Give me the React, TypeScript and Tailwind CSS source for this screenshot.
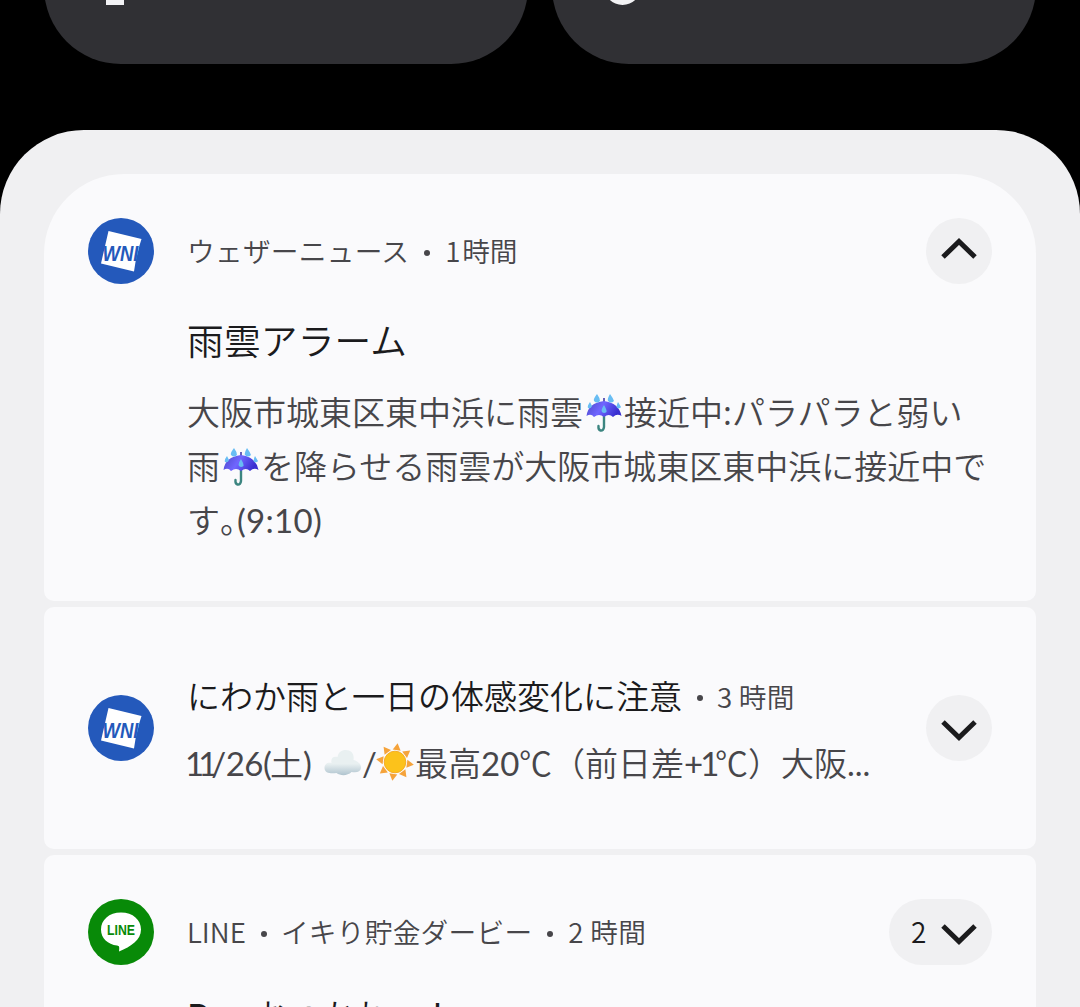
import type { ReactNode } from "react";

const Latin = ({ children, className = "" }: { children: ReactNode; className?: string }) => (
  <span className={`inline-block whitespace-pre font-['Lato','Noto_Sans_CJK_JP',sans-serif] font-normal ${className}`}>{children}</span>
);

const Dot = ({ className = "" }: { className?: string }) => (
  <span className={`inline-block size-[6px] shrink-0 rounded-full bg-[#47464a] ${className}`} />
);

function WeatherLogo() {
  return (
    <svg viewBox="0 0 66 66" className="size-[66px] shrink-0">
      <circle cx="33" cy="33" r="33" fill="#2459bb" />
      <path d="M20.5 13 53.5 21 51.5 27.5 47.500 44 46 53.5 13 45.500z" fill="#fff" />
      <text x="14.500" y="42.500" fontFamily="Liberation Sans" fontWeight="700" fontStyle="italic" fontSize="21.500" textLength="36" lengthAdjust="spacingAndGlyphs" fill="#2459bb">WNI</text>
    </svg>
  );
}

function LineLogo() {
  return (
    <svg viewBox="0 0 66 66" className="size-[66px] shrink-0">
      <circle cx="33" cy="33" r="33" fill="#088a08" />
      <path d="M33 13.500C21 13.500 13 21 13 30.500 13 39.500 20 45.500 29 46.500 31.500 46.800 31.500 48 31 52.500 43 47.500 53 41 53 30.500 53 21 45 13.500 33 13.500z" fill="#fff" />
      <text x="19" y="36" fontFamily="Liberation Sans" fontWeight="700" fontSize="14" textLength="28" lengthAdjust="spacingAndGlyphs" fill="#088a08">LINE</text>
    </svg>
  );
}

const Chevron = ({ up = false }: { up?: boolean }) => (
  <svg viewBox="0 0 40 24" className="h-6 w-10" fill="none" stroke="#1b1b1d" strokeWidth="5">
    <path d={up ? "M4 20 20 4.500 36 20" : "M4 4 20 19.500 36 4"} />
  </svg>
);

const Umbrella = () => (
  <svg viewBox="0 0 38 40" className="mx-[1.500px] inline-block h-[40px] w-[38px] align-[-8px]">
    <defs>
      <linearGradient id="canopy" x1="0" x2="1" y1="0" y2="0.300">
        <stop offset="0" stopColor="#4c48c8" />
        <stop offset="0.500" stopColor="#7066ff" />
        <stop offset="1" stopColor="#392fd0" />
      </linearGradient>
    </defs>
    <path d="M19 18V34Q18.500 38 15.500 37.500 13 37 13.500 33" fill="none" stroke="#3c8580" strokeWidth="2.400" strokeLinecap="round" />
    <path d="M19 5V9" stroke="#6660b8" strokeWidth="2" />
    <path d="M1.500 23Q3 10 19 8 34 10 36.500 23 32 20 28 24 24 20 19 24 14 20 9 24 6 20 1.500 23z" fill="url(#canopy)" />
    <path d="M12 1Q8 6 9 8 12 11 15 8 15 5 12 1zM25 1Q22 6 23 8 26 11 29 8 28 5 25 1zM5 9Q2 13 3 15 6 16 7 13zM33 9Q31 13 32 15 35 16 36 14zM19 12Q15.500 17 17 19 19 21 21.500 19 22 17 19 12z" fill="#68bdf3" />
  </svg>
);

const Cloud = () => (
  <svg viewBox="0 0 38 40" className="mt-[8px] inline-block h-[40px] w-[39px] self-start">
    <defs>
      <linearGradient id="cloud" x1="0" x2="0" y1="0" y2="1">
        <stop offset="0.550" stopColor="#e9f0f1" />
        <stop offset="1" stopColor="#b0c4cf" />
      </linearGradient>
    </defs>
    <path d="M1 25C1 21 4 19 8 20 7 15 10 13 14 14 15 9 18 7 22 7 28 7 31 11 30 17 34 18 38 21 37.500 25 37 29 33 30 28 29 24 33 17 33 13 30 7 31 1 30 1 25z" fill="url(#cloud)" />
  </svg>
);

const Sun = () => (
  <svg viewBox="-20 -20 40 40" className="mt-[7px] inline-block size-[40px] self-start">
    {[8, 53, 98, 143, 188, 233, 278, 323].map((angle) => (
      <path key={angle} d="M-4-12 0-19 4-12z" fill="#f5a33b" transform={`rotate(${angle})`} />
    ))}
    <circle r="10.800" fill="#fcc21b" stroke="#f6ad24" />
  </svg>
);

export default function App() {
  return (
    <main className="flex h-[1007px] w-[1080px] flex-col overflow-hidden bg-black font-['Noto_Sans_CJK_JP',sans-serif] font-[350] text-[#47464a]" lang="ja">
      <div className="flex h-[130px] shrink-0 items-start gap-6 px-[44px]">
        <div className="-mt-[90px] h-[154px] w-[484px] rounded-[77px] bg-[#303034] pl-[62px] pt-[80px]">
          <div className="h-[14.500px] w-[18px] bg-[#f2f2f4]" />
        </div>
        <div className="-mt-[90px] h-[154px] w-[484px] rounded-[77px] bg-[#303034] pl-[52px] pt-[58px]">
          <div className="size-[37px] rounded-full bg-[#f2f2f4]" />
        </div>
      </div>
      <section className="flex h-[877px] shrink-0 flex-col gap-[6px] rounded-t-[84px] bg-[#f0f0f2] px-[44px] pt-[44px]">
        <article className="flex h-[427px] shrink-0 rounded-b-[10px] rounded-t-[80px] bg-[#fafafc] px-[44px] pt-[44px]">
          <WeatherLogo />
          <div className="ml-[33px] w-[805px] shrink-0">
            <div className="flex h-[66px] items-center justify-between">
              <div className="flex items-center whitespace-pre text-[27.700px]">
                <span className="tracking-[0.250px]">ウェザーニュース</span>
                <Dot className="ml-[15px] mr-[15px] mt-1" />
                <span className="w-[17px]">1</span>
                <span>時間</span>
              </div>
              <div className="grid size-[66px] place-items-center rounded-full bg-[#f0f0f2] pb-1"><Chevron up /></div>
            </div>
            <h2 className="mt-[27px] text-[36.700px] leading-[56px] tracking-[0.200px] text-[#1b1b1d]">雨雲アラーム</h2>
            <p className="mt-[17px] whitespace-nowrap text-[33px] leading-[54px]">
              大阪市城東区東中浜に雨雲<Umbrella />接近中:パラパラと弱い<br />
              雨<Umbrella />を降らせる雨雲が大阪市城東区東中浜に接近中で<br />
              す<span className="inline-block w-[17px] [font-feature-settings:'halt']">。</span><Latin className="tracking-[0.300px]">(9:10)</Latin>
            </p>
          </div>
        </article>
        <article className="flex h-[242px] shrink-0 items-center rounded-[10px] bg-[#fafafc] px-[44px]">
          <WeatherLogo />
          <div className="ml-[33px] w-[739px] shrink-0 whitespace-nowrap">
            <div className="flex h-[54px] items-center">
              <h2 className="text-[33px] leading-[54px] text-[#1b1b1d]">にわか雨と一日の体感変化に注意</h2>
              <Dot className="ml-[15px] mr-[14px] mt-[6px]" />
              <span className="mt-1 text-[27.700px] tracking-[0.250px]">3 時間</span>
            </div>
            <p className="mt-[13px] flex h-[54px] items-baseline whitespace-pre text-[33px] leading-[54px]">
              <Latin className="w-[83px] -indent-[2px]"><span className="tracking-[-6px]">11</span><span className="tracking-[-0.500px]">/26(</span></Latin>
              <span>土</span>
              <Latin className="w-[20px]">)</Latin>
              <Cloud />
              <Latin className="w-[13px]">/</Latin>
              <Sun />
              <span>最高</span>
              <Latin className="w-[38px]">20</Latin>
              <span>℃（前日差</span>
              <Latin className="w-[31px] tracking-[-3px]">+1</Latin>
              <span>℃）大阪</span>
              <Latin>...</Latin>
            </p>
          </div>
          <div className="grid size-[66px] shrink-0 place-items-center rounded-full bg-[#f0f0f2] pt-1"><Chevron /></div>
        </article>
        <article className="flex h-[220px] shrink-0 rounded-t-[10px] bg-[#fafafc] px-[44px] pt-[44px]">
          <LineLogo />
          <div className="ml-[33px] w-[805px] shrink-0">
            <div className="flex h-[66px] items-center justify-between">
              <div className="flex items-center whitespace-pre text-[27.700px]">
                <span>LINE</span>
                <Dot className="ml-[15px] mr-[14px] mt-1" />
                <span className="tracking-[0.250px]">イキり貯金ダービー</span>
                <Dot className="ml-[15px] mr-[15px] mt-1" />
                <span className="tracking-[0.250px]">2 時間</span>
              </div>
              <div className="flex h-[66px] w-[103px] items-center gap-[12px] rounded-full bg-[#f0f0f2] pl-[22px] text-[28px] text-[#1b1b1d]"><span className="-mt-[3px] w-[16px]">2</span><span className="mt-1"><Chevron /></span></div>
            </div>
            <h2 className="mt-[22px] flex whitespace-pre text-[33px] leading-[54px] text-[#1b1b1d]"><span className="w-[69px] font-medium">Pay</span><span>おつかれー！</span></h2>
          </div>
        </article>
      </section>
    </main>
  );
}
